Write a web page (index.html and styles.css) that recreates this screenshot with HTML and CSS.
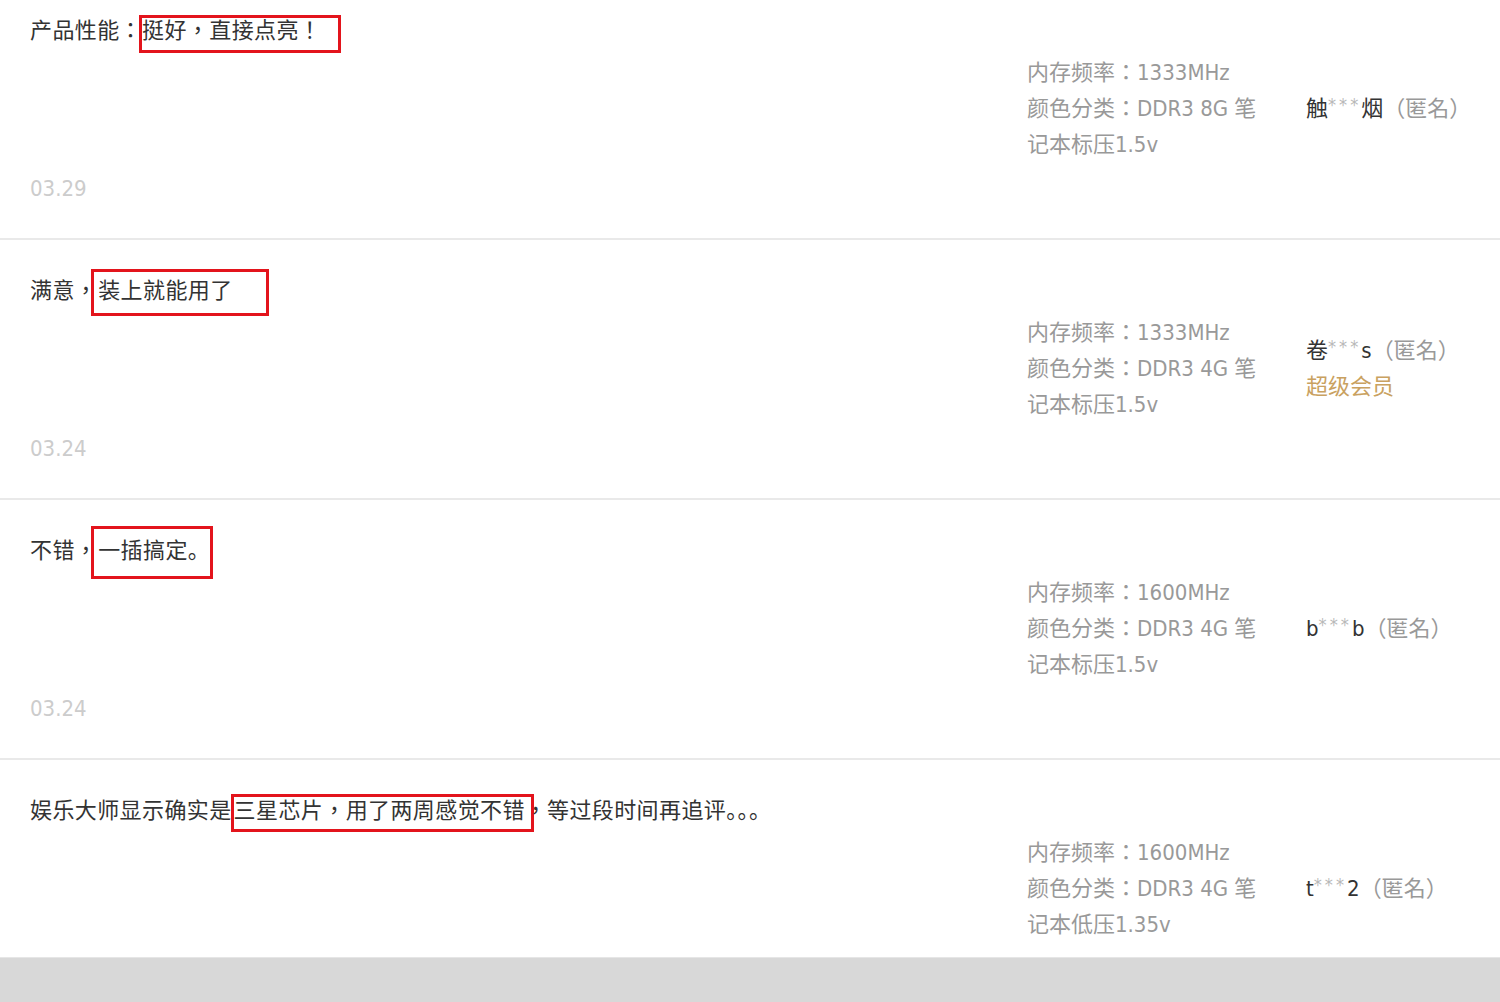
FILE: index.html
```html
<!DOCTYPE html>
<html lang="zh-CN">

<head>
    <meta charset="UTF-8">
    <meta name="viewport" content="width=device-width, initial-scale=1.0">
    <title>评价列表</title>
    <link rel="stylesheet" href="styles.css">
</head>

<body>

    <div class="page">
        <ul class="rate-list">
            <li class="rate">
                <div class="main">
                    <p class="content">产品性能<span class="pu" lang="zh-TW">：</span><span class="mark mark-1">挺好<span class="pu" lang="zh-TW">，</span>直接点亮<span class="pu" lang="zh-TW">！</span></span></p>
                    <div class="date">03.29</div>
                </div>
                <div class="sku">
                    <div>内存频率<span class="pu" lang="zh-TW">：</span>1333MHz</div>
                    <div>颜色分类<span class="pu" lang="zh-TW">：</span>DDR3 8G 笔</div>
                    <div>记本标压1.5v</div>
                </div>
                <div class="user">
                    <div class="nick"><b>触</b><i>***</i><b>烟</b><em lang="zh-TW">（匿名）</em></div>
                </div>
            </li>

            <li class="rate">
                <div class="main">
                    <p class="content">满意<span class="pu" lang="zh-TW">，</span><span class="mark mark-2">装上就能用了</span></p>
                    <div class="date">03.24</div>
                </div>
                <div class="sku">
                    <div>内存频率<span class="pu" lang="zh-TW">：</span>1333MHz</div>
                    <div>颜色分类<span class="pu" lang="zh-TW">：</span>DDR3 4G 笔</div>
                    <div>记本标压1.5v</div>
                </div>
                <div class="user">
                    <div class="nick"><b>卷</b><i>***</i><b>s</b><em lang="zh-TW">（匿名）</em></div>
                    <div class="vip">超级会员</div>
                </div>
            </li>

            <li class="rate">
                <div class="main">
                    <p class="content">不错<span class="pu" lang="zh-TW">，</span><span class="mark mark-3">一插搞定。</span></p>
                    <div class="date">03.24</div>
                </div>
                <div class="sku">
                    <div>内存频率<span class="pu" lang="zh-TW">：</span>1600MHz</div>
                    <div>颜色分类<span class="pu" lang="zh-TW">：</span>DDR3 4G 笔</div>
                    <div>记本标压1.5v</div>
                </div>
                <div class="user">
                    <div class="nick"><b>b</b><i>***</i><b>b</b><em lang="zh-TW">（匿名）</em></div>
                </div>
            </li>

            <li class="rate">
                <div class="main">
                    <p class="content">娱乐大师显示确实是<span class="mark mark-4">三星芯片<span class="pu" lang="zh-TW">，</span>用了两周感觉不错</span><span class="pu" lang="zh-TW">，</span>等过段时间再追评。。。</p>
                </div>
                <div class="sku">
                    <div>内存频率<span class="pu" lang="zh-TW">：</span>1600MHz</div>
                    <div>颜色分类<span class="pu" lang="zh-TW">：</span>DDR3 4G 笔</div>
                    <div>记本低压1.35v</div>
                </div>
                <div class="user">
                    <div class="nick"><b>t</b><i>***</i><b>2</b><em lang="zh-TW">（匿名）</em></div>
                </div>
            </li>
        </ul>
    </div>

    <div class="bottom-bar"></div>

</body>

</html>
```

FILE: styles.css
```css
html, body { margin: 0; padding: 0; background: #fff; }
body { font-family: "DejaVu Sans Condensed", "Noto Sans CJK SC", sans-serif; font-size: 22px; color: #333; }

/* centred full-width punctuation, kept from growing the line box */
.pu, .user .nick em { font-family: "Noto Sans CJK TC", sans-serif; line-height: 0; }

.page { height: 957px; overflow: hidden; }
.rate-list { margin: -22px 0 0 0; padding: 0; list-style: none; }

.rate { display: flex; align-items: center; height: 260px; box-sizing: border-box; border-top: 2px solid #e9e9e9; }
.rate:first-child { border-top-color: transparent; }

.rate .main { flex: 1; align-self: stretch; display: flex; flex-direction: column; justify-content: space-between; padding: 33px 0 31px 30px; }
.rate .content { margin: 0; line-height: 36px; letter-spacing: 0.4px; }
.rate .date { line-height: 36px; color: #ccc; letter-spacing: 0; }

.mark { display: inline-block; box-sizing: border-box; border: 3px solid #e3141c; white-space: nowrap; }
.mark-1 { width: 202px; height: 38px; line-height: 26px; padding-bottom: 6px; margin-left: -3px; }
.mark-2 { width: 178px; height: 47px; line-height: 38px; padding: 0 0 3px 4px; margin: -4px 0 0 -6px; }
.mark-3 { width: 122px; height: 53px; line-height: 44px; padding: 0 0 3px 4px; margin: -7px 0 0 -6px; }
.mark-4 { width: 303px; height: 38px; line-height: 28px; padding-bottom: 4px; margin: 0 -9px 0 -1px; }

.rate .sku { width: 279px; line-height: 36px; color: #999; }
.rate .user { width: 194px; line-height: 36px; color: #999; }
.user .nick b { font-weight: normal; color: #333; }
.user .nick i { font-style: normal; font-size: 18px; letter-spacing: 3px; color: #b8b8b8; vertical-align: 5px; line-height: 0; }
.user .nick em { font-style: normal; color: #999; }
.user .vip { color: #c9a160; }

.bottom-bar { height: 45px; background: #d8d8d8; border-top: 1px solid #e6e6e6; box-sizing: border-box; }
```
